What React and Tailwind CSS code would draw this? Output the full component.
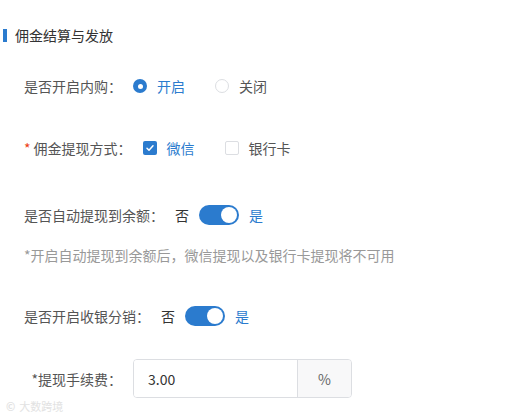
import React, { useState } from "react";

const font = { fontFamily: '"Microsoft YaHei", "Noto Sans CJK SC", "Liberation Sans", sans-serif' };

const Radio = ({ checked, label, onClick }) => (
  <button onClick={onClick} className="flex items-center gap-[10px] h-5 focus:outline-none">
    {checked ? (
      <span className="w-[14px] h-[14px] rounded-full bg-[#2b7bce] flex items-center justify-center">
        <span className="w-[5px] h-[5px] rounded-full bg-white" />
      </span>
    ) : (
      <span className="w-[14px] h-[14px] rounded-full border border-[#dcdee2] bg-white" />
    )}
    <span className={checked ? "text-[#2b7bce]" : "text-[#555]"}>{label}</span>
  </button>
);

const Checkbox = ({ checked, label, onClick }) => (
  <button onClick={onClick} className="flex items-center gap-[10px] h-5 focus:outline-none">
    {checked ? (
      <span className="w-[14px] h-[14px] rounded-[2px] bg-[#2b7bce] flex items-center justify-center">
        <svg width="10" height="10" viewBox="0 0 10 10" fill="none">
          <path d="M2 5.2l2 2 4-4.4" stroke="white" strokeWidth="1.5" strokeLinecap="round" strokeLinejoin="round" />
        </svg>
      </span>
    ) : (
      <span className="w-[14px] h-[14px] rounded-[2px] border border-[#dcdee2] bg-white" />
    )}
    <span className={checked ? "text-[#2b7bce]" : "text-[#555]"}>{label}</span>
  </button>
);

const Toggle = ({ on, onClick }) => (
  <div className="flex items-center gap-[10px] h-5">
    <span className="text-[#333]">否</span>
    <button
      onClick={onClick}
      className={`w-10 h-5 rounded-full flex items-center px-[2px] focus:outline-none ${
        on ? "bg-[#2b7bce] justify-end" : "bg-[#ccc] justify-start"
      }`}
    >
      <span className="w-4 h-4 rounded-full bg-white" />
    </button>
    <span className="text-[#2b7bce]">是</span>
  </div>
);

export default function App() {
  const [buy, setBuy] = useState(true);
  const [wechat, setWechat] = useState(true);
  const [bank, setBank] = useState(false);
  const [autoW, setAutoW] = useState(true);
  const [cashier, setCashier] = useState(true);

  return (
    <div style={font} className="w-[529px] h-[419px] bg-white text-[14px] leading-5 text-[#555] relative overflow-hidden">
      {/* Title */}
      <div className="pt-[25px] flex items-center pl-[3px] gap-2">
        <span className="w-1 h-[13px] bg-[#2b7bce]" />
        <span className="text-[#333]">佣金结算与发放</span>
      </div>

      {/* 内购 */}
      <div className="mt-[31px] pl-6 flex items-center">
        <span className="mr-[11px]">是否开启内购：</span>
        <div className="flex items-center gap-[30px]">
          <Radio checked={buy} label="开启" onClick={() => setBuy(true)} />
          <Radio checked={!buy} label="关闭" onClick={() => setBuy(false)} />
        </div>
      </div>

      {/* 提现方式 */}
      <div className="mt-[42px] pl-6 flex items-center">
        <span className="mr-[11px]">
          <span className="text-[#ed4014] mr-[3px]">*</span>佣金提现方式：
        </span>
        <div className="flex items-center gap-[30px]">
          <Checkbox checked={wechat} label="微信" onClick={() => setWechat(!wechat)} />
          <Checkbox checked={bank} label="银行卡" onClick={() => setBank(!bank)} />
        </div>
      </div>

      {/* 自动提现 */}
      <div className="mt-[47px] pl-6 flex items-center">
        <span className="mr-[11px]">是否自动提现到余额：</span>
        <Toggle on={autoW} onClick={() => setAutoW(!autoW)} />
      </div>
      <div className="mt-5 pl-6 text-[#999]">*开启自动提现到余额后，微信提现以及银行卡提现将不可用</div>

      {/* 收银分销 */}
      <div className="mt-[41px] pl-6 flex items-center">
        <span className="mr-[11px]">是否开启收银分销：</span>
        <Toggle on={cashier} onClick={() => setCashier(!cashier)} />
      </div>

      {/* 手续费 */}
      <div className="mt-[33px] flex items-center">
        <span className="w-[122px] text-right mr-[11px]">*提现手续费：</span>
        <div className="flex w-[219px] h-[39px] border border-[#dcdee2] rounded-[4px] overflow-hidden">
          <input
            defaultValue="3.00"
            className="flex-1 min-w-0 px-[14px] text-[#333] outline-none bg-white"
            style={font}
          />
          <span className="w-[54px] bg-[#f8f8f9] border-l border-[#dcdee2] flex items-center justify-center text-[#666]">
            %
          </span>
        </div>
      </div>

      {/* watermark */}
      <div className="absolute left-[6px] bottom-[3px] text-[11px] text-[#e2e2e2] flex items-center gap-1">
        <span className="font-bold">©</span>
        <span>大数跨境</span>
      </div>
    </div>
  );
}
